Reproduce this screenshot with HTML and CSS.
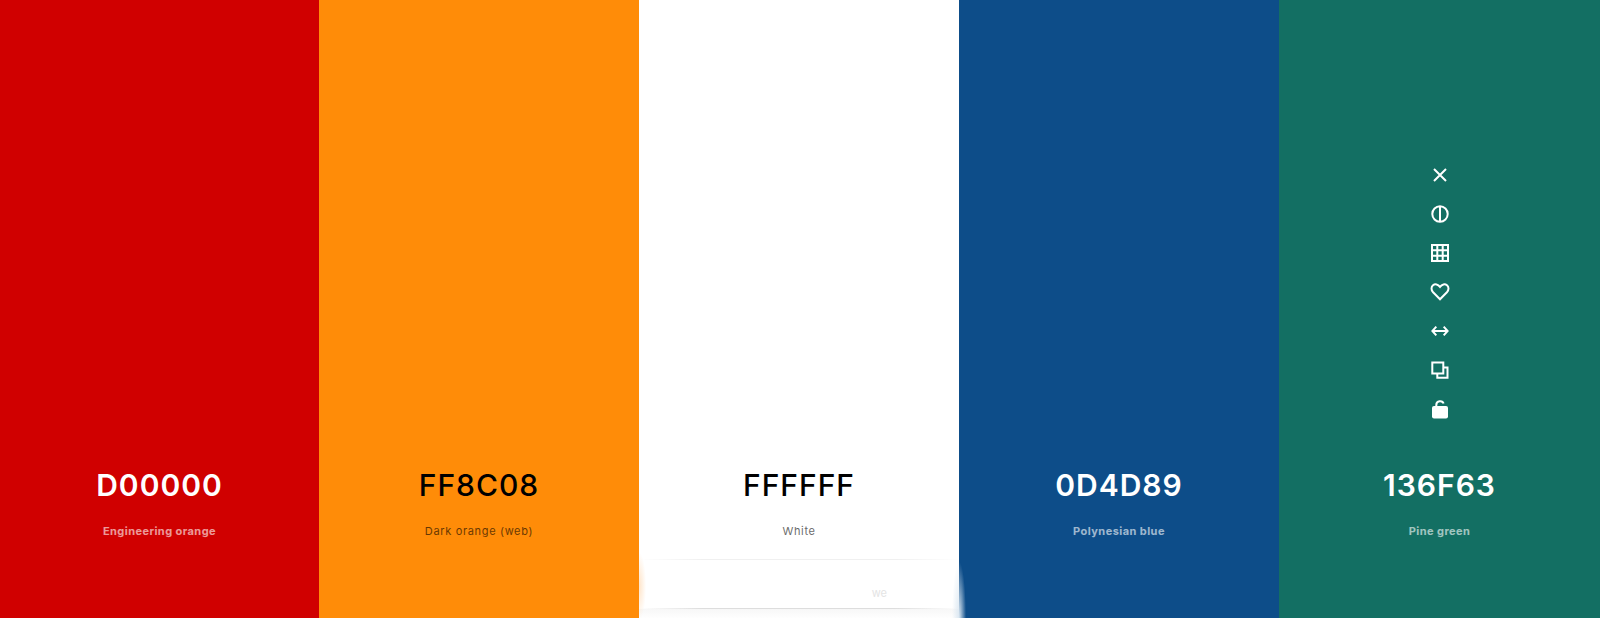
FILE: index.html
```html
<!DOCTYPE html>
<html lang="en">
<head>
<meta charset="utf-8">
<title>Color palette</title>
<link rel="stylesheet" href="styles.css">
</head>
<body>
<main class="palette">
  <section class="color red">
    <h2 class="hex">D00000</h2>
    <p class="name">Engineering orange</p>
  </section>
  <section class="color orange dark-text">
    <h2 class="hex">FF8C08</h2>
    <p class="name">Dark orange (web)</p>
  </section>
  <section class="color white dark-text">
    <h2 class="hex">FFFFFF</h2>
    <p class="name">White</p>
    <div class="toast"><span class="toast-text">we</span></div>
  </section>
  <section class="color blue">
    <h2 class="hex">0D4D89</h2>
    <p class="name">Polynesian blue</p>
  </section>
  <section class="color green">
    <div class="tools">
      <button class="tool" type="button" aria-label="Remove color"><svg viewBox="0 0 20 20"><path d="M4 4l12 12M16 4L4 16"/></svg></button>
      <button class="tool" type="button" aria-label="Check contrast"><svg viewBox="0 0 20 20"><circle cx="10" cy="10" r="7.7"/><path d="M10 2.5v15"/></svg></button>
      <button class="tool" type="button" aria-label="View shades"><svg viewBox="0 0 20 20"><path d="M2 2h16v16h-16zM7.300 2v16M12.700 2v16M2 7.300h16M2 12.700h16"/></svg></button>
      <button class="tool" type="button" aria-label="Save color"><svg viewBox="0 0 20 20"><path d="M10 17.300L3.100 10.200C.9 7.800 1.100 4.800 3 3.200C5.100 1.600 8 2.100 10 4.900C12 2.100 14.900 1.600 17 3.200C18.900 4.800 19.100 7.800 16.900 10.200Z"/></svg></button>
      <button class="tool" type="button" aria-label="Drag color"><svg viewBox="0 0 20 20"><path d="M2.500 10h15M6.300 5.700L2.400 10l3.900 4.300M13.700 5.700l3.900 4.300l-3.900 4.300"/></svg></button>
      <button class="tool" type="button" aria-label="Copy color"><svg viewBox="0 0 20 20"><path d="M2.300 2.500h11v11h-11zM13.300 7.500h4.200v10.300H7.300V13.500"/></svg></button>
      <button class="tool" type="button" aria-label="Lock color"><svg viewBox="0 0 20 20"><path d="M6.300 8.500V6C6.300 1.500 12.500 1.200 13.600 4.500"/><rect class="solid" x="2" y="7" width="16" height="12.500" rx="2"/></svg></button>
    </div>
    <h2 class="hex">136F63</h2>
    <p class="name">Pine green</p>
  </section>
</main>
</body>
</html>
```
FILE: styles.css
```css
* { box-sizing: border-box; }

body {
  margin: 0;
  font-family: Inter, "Liberation Sans", sans-serif;
}

.palette {
  display: grid;
  grid-template-columns: 319fr 320fr 320fr 320fr 321fr;
  min-height: 100vh;
}

.color {
  position: relative;
  display: flex;
  flex-direction: column;
  align-items: center;
  justify-content: flex-end;
  padding-bottom: 79px;
  color: #fff;
  text-align: center;
}

.red { background: #d00000; }
.orange { background: #ff8c08; }
.white { background: #fff; z-index: 1; }
.blue { background: #0d4d89; }
.green { background: #136f63; }
.dark-text { color: #000; }

.hex {
  margin: 0 0 18px;
  font-size: 30px;
  line-height: 40px;
  font-weight: 600;
  letter-spacing: 1px;
}

.name {
  margin: 0;
  font-size: 11px;
  line-height: 16px;
  font-weight: 700;
  letter-spacing: 0.04em;
  opacity: 0.6;
}

.dark-text .hex { font-weight: 500; }
.dark-text .name { font-weight: 400; letter-spacing: 0.06em; }

.tools {
  display: flex;
  flex-direction: column;
  gap: 15px;
  margin-bottom: 44px;
}

.tool {
  width: 24px;
  height: 24px;
  padding: 2px;
  border: 0;
  background: none;
  color: inherit;
}

.tool svg {
  display: block;
  width: 20px;
  height: 20px;
  fill: none;
  stroke: currentColor;
  stroke-width: 2;
}

.tool .solid {
  fill: currentColor;
  stroke: none;
}

/* Faded notification along the lower edge */
.toast {
  position: absolute;
  inset: auto 0 0;
  height: 59px;
  background:
    linear-gradient(90deg, transparent, #f0f0f0 20% 80%, transparent) 0 0 / 100% 1px no-repeat,
    linear-gradient(90deg, transparent, #dddddd 20% 80%, transparent) 0 49px / 100% 1px no-repeat,
    linear-gradient(#f7f7f7, #fefefe) 0 50px / 100% 9px no-repeat;
}

.toast::before,
.toast::after {
  content: "";
  position: absolute;
  bottom: 0;
  width: 20px;
  height: 80px;
}

.toast::before {
  left: -10px;
  background: radial-gradient(ellipse at 50% 60%, #ffe4c8, transparent 50%);
  clip-path: inset(0 0 0 10px);
}

.toast::after {
  right: -10px;
  background: radial-gradient(ellipse at 50% 100%, #dce8f2, transparent 50%);
}

.toast-text {
  display: block;
  padding: 26px 72px 0 0;
  color: #e4e4e4;
  font-size: 11px;
  line-height: 16px;
  text-align: right;
}
```
